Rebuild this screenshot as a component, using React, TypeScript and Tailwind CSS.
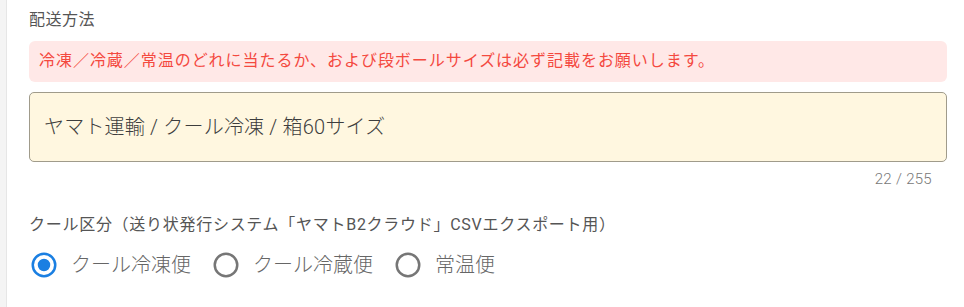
const FONT = "font-['Roboto','Noto_Sans_CJK_JP',sans-serif]";

const RadioIcon = ({ checked }: { checked: boolean }) => (
  <svg viewBox="0 0 24 24" className={`h-[30px] w-[30px] ${checked ? "text-[#1a7fe2]" : "text-[#767676]"}`}>
    {checked ? (
      <path
        fill="currentColor"
        d="M12,20A8,8 0 0,1 4,12A8,8 0 0,1 12,4A8,8 0 0,1 20,12A8,8 0 0,1 12,20M12,2A10,10 0 0,0 2,12A10,10 0 0,0 12,22A10,10 0 0,0 22,12A10,10 0 0,0 12,2M12,7A5,5 0 0,0 7,12A5,5 0 0,0 12,17A5,5 0 0,0 17,12A5,5 0 0,0 12,7Z"
      />
    ) : (
      <path
        fill="currentColor"
        d="M12,20A8,8 0 0,1 4,12A8,8 0 0,1 12,4A8,8 0 0,1 20,12A8,8 0 0,1 12,20M12,2A10,10 0 0,0 2,12A10,10 0 0,0 12,22A10,10 0 0,0 22,12A10,10 0 0,0 12,2Z"
      />
    )}
  </svg>
);

const options = [
  { label: "クール冷凍便", checked: true },
  { label: "クール冷蔵便", checked: false },
  { label: "常温便", checked: false },
];

export default function App() {
  return (
    <div className={`flex h-[307px] w-[964px] bg-white ${FONT}`}>
      {/* left rail */}
      <div className="w-[7px] shrink-0 border-r border-[#e6e6e6] bg-[#f4f4f4]" />

      <div className="flex-1 pl-[22px] pr-[17px] pt-[10px]">
        <h2 className="text-[16px] leading-[20px] font-normal tracking-[0.03em] text-[#555]">配送方法</h2>

        <div className="mt-[11px] rounded-[6px] bg-[#ffe8e7] pl-[10px] pt-[9px] pb-[11px] text-[16px] leading-[21px] font-normal tracking-[0.06em] text-[#f4493f]">
          冷凍／冷蔵／常温のどれに当たるか、および段ボールサイズは必ず記載をお願いします。
        </div>

        <div className="mt-[10px] flex h-[70px] items-center rounded-[5px] border border-[#a09b8b] bg-[#fff7e0] pl-[14px]">
          <span className="text-[20px] leading-[24px] font-light tracking-[0.01em] text-[#3d3d3d]">ヤマト運輸 / クール冷凍 / 箱60サイズ</span>
        </div>

        <div className="flex justify-end pr-[15px] pt-[8px] text-[15px] leading-[18px] font-light tracking-[0.02em] text-[#777]">22 / 255</div>

        <div className="mt-[27px] text-[16px] leading-[20px] font-normal tracking-[0.045em] text-[#555]">
          クール区分（送り状発行システム「ヤマトB2クラウド」CSVエクスポート用）
        </div>

        <div className="mt-[15px] flex items-center">
          {options.map((o) => (
            <label key={o.label} className="mr-[20px] flex items-center">
              <RadioIcon checked={o.checked} />
              <span className="ml-[12px] text-[20px] leading-[28px] font-light text-[#666]">{o.label}</span>
            </label>
          ))}
        </div>
      </div>
    </div>
  );
}
